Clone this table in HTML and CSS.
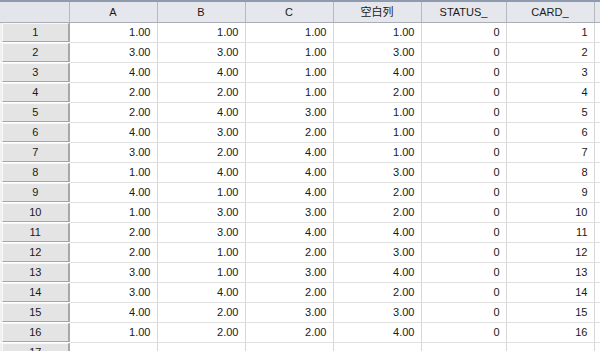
FILE: index.html
```html
<!DOCTYPE html>
<html>
<head>
<meta charset="utf-8">
<link rel="stylesheet" href="styles.css">
</head>
<body>
<div class="sheet">
<table class="grid">
<colgroup>
<col class="c-rh"><col class="c-88"><col class="c-88"><col class="c-88"><col class="c-88"><col class="c-85"><col class="c-88"><col class="c-rest">
</colgroup>
<thead>
<tr><th class="corner"></th><th>A</th><th>B</th><th>C</th><th>空白列</th><th>STATUS_</th><th>CARD_</th><th class="rest"></th></tr>
</thead>
<tbody>
<tr><th class="rh"><div>1</div></th><td>1.00</td><td>1.00</td><td>1.00</td><td>1.00</td><td>0</td><td>1</td><td class="rest"></td></tr>
<tr><th class="rh"><div>2</div></th><td>3.00</td><td>3.00</td><td>1.00</td><td>3.00</td><td>0</td><td>2</td><td class="rest"></td></tr>
<tr><th class="rh"><div>3</div></th><td>4.00</td><td>4.00</td><td>1.00</td><td>4.00</td><td>0</td><td>3</td><td class="rest"></td></tr>
<tr><th class="rh"><div>4</div></th><td>2.00</td><td>2.00</td><td>1.00</td><td>2.00</td><td>0</td><td>4</td><td class="rest"></td></tr>
<tr><th class="rh"><div>5</div></th><td>2.00</td><td>4.00</td><td>3.00</td><td>1.00</td><td>0</td><td>5</td><td class="rest"></td></tr>
<tr><th class="rh"><div>6</div></th><td>4.00</td><td>3.00</td><td>2.00</td><td>1.00</td><td>0</td><td>6</td><td class="rest"></td></tr>
<tr><th class="rh"><div>7</div></th><td>3.00</td><td>2.00</td><td>4.00</td><td>1.00</td><td>0</td><td>7</td><td class="rest"></td></tr>
<tr><th class="rh"><div>8</div></th><td>1.00</td><td>4.00</td><td>4.00</td><td>3.00</td><td>0</td><td>8</td><td class="rest"></td></tr>
<tr><th class="rh"><div>9</div></th><td>4.00</td><td>1.00</td><td>4.00</td><td>2.00</td><td>0</td><td>9</td><td class="rest"></td></tr>
<tr><th class="rh"><div>10</div></th><td>1.00</td><td>3.00</td><td>3.00</td><td>2.00</td><td>0</td><td>10</td><td class="rest"></td></tr>
<tr><th class="rh"><div>11</div></th><td>2.00</td><td>3.00</td><td>4.00</td><td>4.00</td><td>0</td><td>11</td><td class="rest"></td></tr>
<tr><th class="rh"><div>12</div></th><td>2.00</td><td>1.00</td><td>2.00</td><td>3.00</td><td>0</td><td>12</td><td class="rest"></td></tr>
<tr><th class="rh"><div>13</div></th><td>3.00</td><td>1.00</td><td>3.00</td><td>4.00</td><td>0</td><td>13</td><td class="rest"></td></tr>
<tr><th class="rh"><div>14</div></th><td>3.00</td><td>4.00</td><td>2.00</td><td>2.00</td><td>0</td><td>14</td><td class="rest"></td></tr>
<tr><th class="rh"><div>15</div></th><td>4.00</td><td>2.00</td><td>3.00</td><td>3.00</td><td>0</td><td>15</td><td class="rest"></td></tr>
<tr><th class="rh"><div>16</div></th><td>1.00</td><td>2.00</td><td>2.00</td><td>4.00</td><td>0</td><td>16</td><td class="rest"></td></tr>
<tr><th class="rh"><div>17</div></th><td></td><td></td><td></td><td></td><td></td><td></td><td class="rest"></td></tr>
</tbody>
</table>
</div>
</body>
</html>
```
FILE: styles.css
```css
html, body {
  margin: 0;
  padding: 0;
  background: #ffffff;
  overflow: hidden;
}
.sheet {
  width: 600px;
  height: 351px;
  overflow: hidden;
  border-top: 2px solid #8e9aad;
  box-sizing: border-box;
  font-family: "Liberation Sans", Arial, "Noto Sans CJK SC", sans-serif;
  font-size: 11px;
  color: #1a1a1a;
}
.grid {
  border-collapse: collapse;
  table-layout: fixed;
  width: 640px;
}
.c-rh { width: 69px; }
.c-88 { width: 88px; }
.c-85 { width: 85px; }
.c-rest { width: 55px; }
thead th {
  height: 20px;
  padding: 0 4px;
  background: #e5e7ec;
  border-right: 1px solid #b4b8c0;
  border-bottom: 1px solid #a9adb5;
  font-weight: normal;
  text-align: center;
  vertical-align: middle;
  line-height: 20px;
}
thead th.corner {
  background: #e3e5ea;
}
tbody td {
  height: 19px;
  padding: 0 6px 0 4px;
  border-right: 1px solid #d6d6d6;
  border-bottom: 1px solid #e0e0e0;
  text-align: right;
  vertical-align: middle;
  line-height: 19px;
  background: #fff;
}
tbody th.rh {
  padding: 0;
  height: 19px;
  background: #f0f0f0;
  border-right: 1px solid #a8a8a8;
  border-bottom: 1px solid #ffffff;
  font-weight: normal;
}
.rh div {
  height: 17px;
  margin: 0 0 0 2px;
  line-height: 17px;
  text-align: center;
  background: #e4e4e4;
  border-top: 1px solid #f8f8f8;
  border-left: 1px solid #f8f8f8;
  border-bottom: 1px solid #a6a6a6;
  border-right: 1px solid #a6a6a6;
}
```
